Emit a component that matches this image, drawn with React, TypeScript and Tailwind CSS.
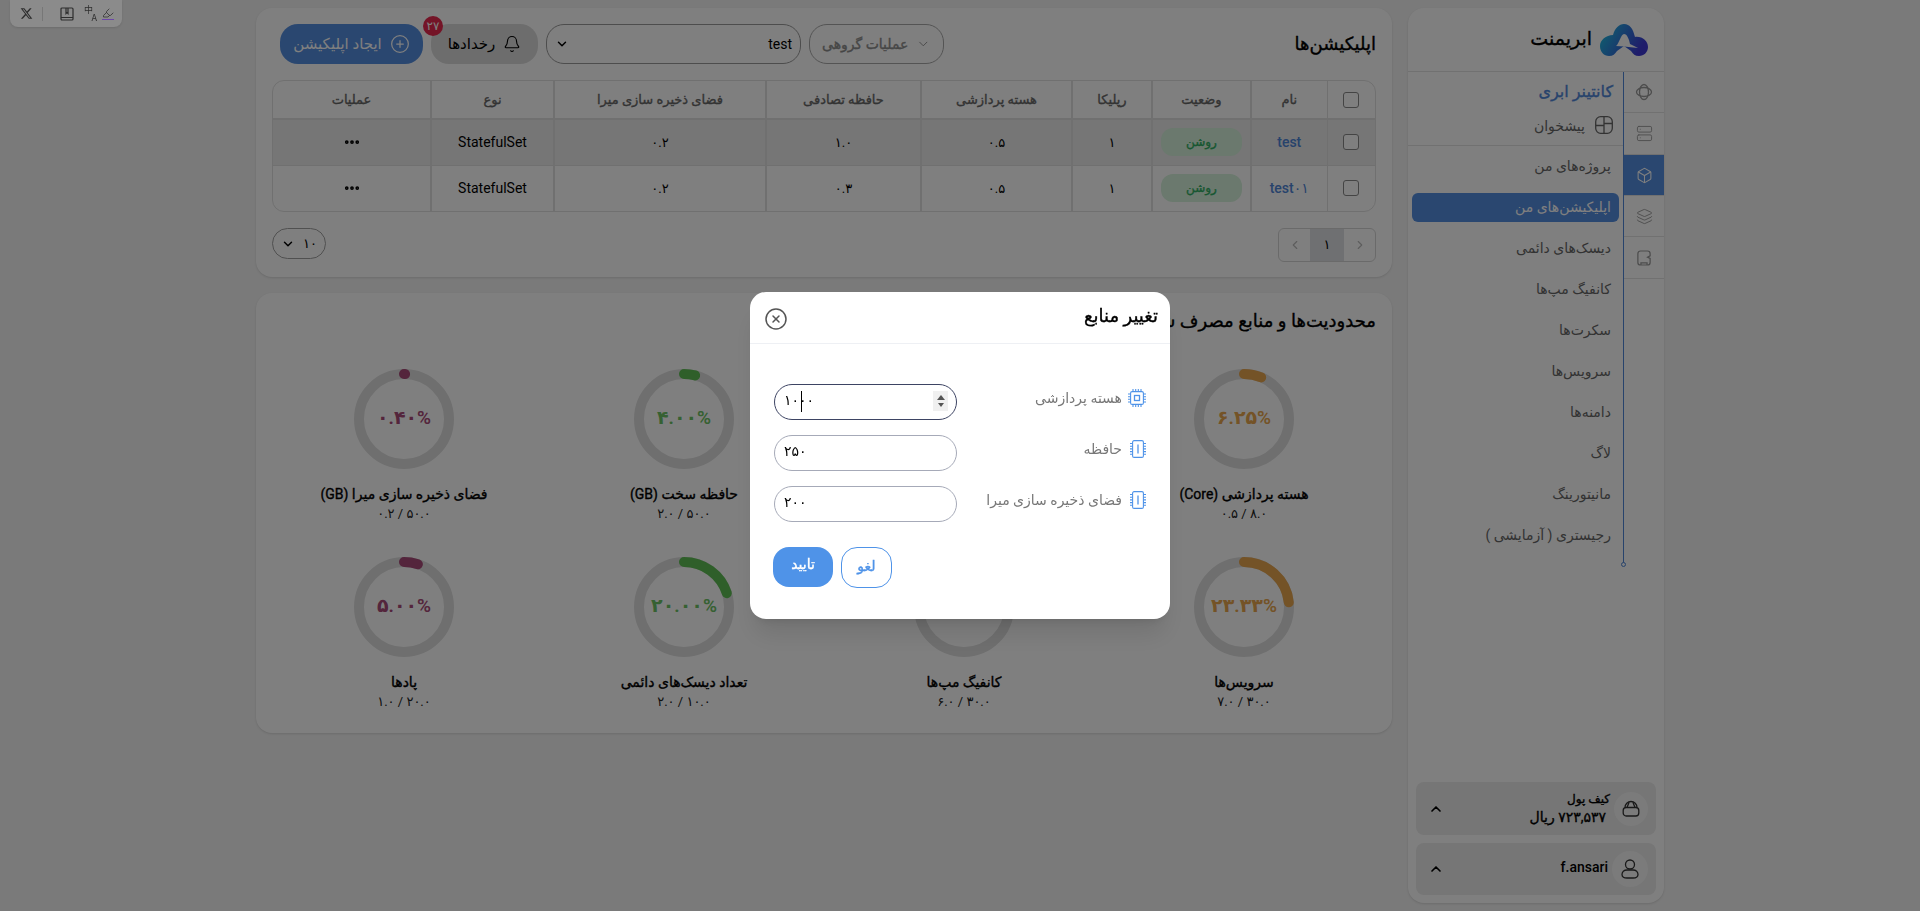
import { Bell, Box, ChevronDown, ChevronLeft, ChevronRight, ChevronUp, CirclePlus, CircleX, Ellipsis, Highlighter, Layers, Server } from "lucide-react";

const menuItems = [
  "پروژه‌های من",
  "اپلیکیشن‌های من",
  "دیسک‌های دائمی",
  "کانفیگ مپ‌ها",
  "سکرت‌ها",
  "سرویس‌ها",
  "دامنه‌ها",
  "لاگ",
  "مانیتورینگ",
  "رجیستری ( آزمایشی )",
];

// DejaVu's bold runs much wider than the reference, so thicken the regular cut instead
const heavy = "font-normal [-webkit-text-stroke:0.35px_currentColor]";

const orange = { stroke: "#e8a64e", text: "text-[#e8a64e]" };
const green = { stroke: "#5fbf55", text: "text-[#6cc264]" };
const purple = { stroke: "#a84a78", text: "text-[#a84a78]" };

const gauges = [
  { title: "هسته پردازشی (Core)", sub: "۰.۵ / ۸.۰", pct: 6.25, label: "۶.۲۵%", tone: orange },
  { title: "حافظه تصادفی (GB)", sub: "۱.۳ / ۱۶.۰", pct: 8.13, label: "۸.۱۳%", tone: orange },
  { title: "حافظه سخت (GB)", sub: "۲.۰ / ۵۰.۰", pct: 4, label: "۴.۰۰%", tone: green },
  { title: "فضای ذخیره سازی میرا (GB)", sub: "۰.۲ / ۵۰.۰", pct: 0.4, label: "۰.۴۰%", tone: purple },
  { title: "سرویس‌ها", sub: "۷.۰ / ۳۰.۰", pct: 23.33, label: "۲۳.۳۳%", tone: orange },
  { title: "کانفیگ مپ‌ها", sub: "۶.۰ / ۳۰.۰", pct: 20, label: "۲۰.۰۰%", tone: green },
  { title: "تعداد دیسک‌های دائمی", sub: "۲.۰ / ۱۰.۰", pct: 20, label: "۲۰.۰۰%", tone: green },
  { title: "پادها", sub: "۱.۰ / ۲۰.۰", pct: 5, label: "۵.۰۰%", tone: purple },
];

const rows = [
  { name: "test", memory: "۱.۰", hover: true },
  { name: "test۰۱", memory: "۰.۳", hover: false },
];

const Logo = () => (
  <svg width="48" height="32" viewBox="0 0 48 32">
    <defs>
      <linearGradient id="logoFill" x1="0" y1="0" x2="1" y2="0.4">
        <stop offset="0" stopColor="#1ccbe0" />
        <stop offset="1" stopColor="#3e38d4" />
      </linearGradient>
    </defs>
    <path
      d="M13 11C15 4 19 0 24 0C30 0 33 5 35 13C42 12 48 17 48 23C48 28 44 32 39 32C35 32 33 30 31 27L24 22L17 27C15 30 13 32 9 32C4 32 0 28 0 22C0 16 6 11 13 11Z"
      fill="url(#logoFill)"
    />
    <path d="M24 10C27 10 29 15 30 20L38 24L24 22.5L16 22C19 20 21 10 24 10Z" fill="#fff" />
  </svg>
);

const OrbitIcon = () => (
  <svg width="18" height="18" viewBox="0 0 18 18" fill="none" stroke="#999" strokeWidth="1.3">
    <ellipse cx="9" cy="9" rx="4.5" ry="7.5" />
    <ellipse cx="9" cy="9" rx="7.5" ry="4.5" />
  </svg>
);

const SimIcon = () => (
  <svg width="14" height="16" viewBox="0 0 16 18" fill="none" stroke="#999" strokeWidth="1.4">
    <path d="M4 1H12A3 3 0 0 1 15 4V6.5L12 8L15 9.5V14A3 3 0 0 1 12 17H4A3 3 0 0 1 1 14V4A3 3 0 0 1 4 1Z" />
    <path d="M4.5 17V14.5H11.5V17" />
  </svg>
);

const DashIcon = () => (
  <svg width="18" height="18" viewBox="0 0 18 18" fill="none" stroke="#666" strokeWidth="1.3">
    <rect x="0.7" y="0.7" width="16.6" height="16.6" rx="5" />
    <path d="M9 0.7V17.3M0.7 9.5H9M9 7.5H17.3" />
  </svg>
);

const WalletIcon = () => (
  <svg width="18" height="18" viewBox="0 0 18 18" fill="none" stroke="#333" strokeWidth="1.3">
    <path d="M3 7.5A6 6 0 0 1 15 7.5" />
    <rect x="1.2" y="7.5" width="15.6" height="8.5" rx="3" />
    <path d="M7 2.5L5 7.5M11 2.5L13 7.5" />
  </svg>
);

const UserIcon = () => (
  <svg width="18" height="20" viewBox="0 0 18 20" fill="none" stroke="#333" strokeWidth="1.3">
    <circle cx="9" cy="5.5" r="4.5" />
    <path d="M6 11H12C15 11 17 13 17 15.5C17 18 15 19 12 19H6C3 19 1 18 1 15.5C1 13 3 11 6 11Z" />
  </svg>
);

const CpuChip = () => (
  <svg width="18" height="18" viewBox="0 0 18 18" fill="none" stroke="#4f93e8" strokeWidth="1.1">
    <rect x="2.6" y="2.6" width="12.8" height="12.8" rx="1.5" />
    <rect x="6.5" y="6.5" width="5" height="5" strokeWidth="1.3" />
    <path d="M5 0V2.6M7.7 0V2.6M10.3 0V2.6M13 0V2.6M5 15.4V18M7.7 15.4V18M10.3 15.4V18M13 15.4V18M0 5H2.6M0 7.7H2.6M0 10.3H2.6M0 13H2.6M15.4 5H18M15.4 7.7H18M15.4 10.3H18M15.4 13H18" />
  </svg>
);

const RamChip = () => (
  <svg width="16" height="18" viewBox="0 0 16 18" fill="none" stroke="#4f93e8" strokeWidth="1.1">
    <rect x="2.6" y="0.6" width="10.8" height="16.8" rx="1.5" />
    <path d="M8 4.5V13.5" strokeWidth="1.3" />
    <path d="M0 3.5H2.6M0 6.2H2.6M0 8.9H2.6M0 11.6H2.6M0 14.3H2.6M13.4 3.5H16M13.4 6.2H16M13.4 8.9H16M13.4 11.6H16M13.4 14.3H16" />
  </svg>
);

const BookIcon = () => (
  <svg className="shrink-0" width="14" height="14" viewBox="0 0 14 14" fill="none" stroke="#2e2e2e" strokeWidth="1.2">
    <rect x="1" y="1" width="12" height="12" rx="1" />
    <path d="M1 10.5H13M6 1V6.5L7 5.5L8 6.5V1" />
  </svg>
);

const XLogo = () => (
  <svg className="shrink-0" width="13" height="13" viewBox="0 0 24 24" fill="#2e2e2e">
    <path d="M18.2 2.3h3.3l-7.2 8.2L22.8 21.8h-6.6l-5.2-6.8-6 6.8H1.7l7.7-8.8L1.2 2.3h6.8l4.7 6.2zm-1.2 17.5h1.8L7 4.2H5z" />
  </svg>
);

const Gauge = ({ item }: { item: (typeof gauges)[number] }) => (
  <div className="flex flex-col items-center">
    <div className="relative h-[100px] w-[100px]">
      <svg width="100" height="100" viewBox="0 0 100 100" className="-rotate-90">
        <circle cx="50" cy="50" r="45" fill="none" stroke="#dfdfdf" strokeWidth="10" />
        <circle
          cx="50"
          cy="50"
          r="45"
          fill="none"
          stroke={item.tone.stroke}
          strokeWidth="10"
          strokeLinecap="round"
          pathLength="100"
          strokeDasharray={`${item.pct} 100`}
        />
      </svg>
      <div className={`absolute inset-0 flex items-center justify-center pb-0.5 text-[19px] font-semibold ${item.tone.text}`}>
        <span dir="ltr">{item.label}</span>
      </div>
    </div>
    <div className={`mt-[15px] text-sm leading-5 text-black ${heavy}`}>{item.title}</div>
    <div dir="ltr" className="text-[13px] leading-5 text-[#222]">
      {item.sub}
    </div>
  </div>
);

const Field = ({
  icon,
  label,
  value,
  focused,
}: {
  icon: React.ReactNode;
  label: string;
  value: string;
  focused?: boolean;
}) => (
  <div className="flex items-start justify-between">
    <div className="mt-1 flex items-center gap-[6px] text-sm leading-5 text-[#777]">
      <span className="flex w-[18px] justify-start">{icon}</span>
      {label}
    </div>
    <div className="relative">
      <input
        dir="ltr"
        readOnly
        value={value}
        className={`h-9 w-[183px] rounded-[18px] bg-white px-[9px] pb-1 text-sm text-black outline-none ${
          focused ? "border-[1.5px] border-[#3d4463]" : "border border-[#a6aab8]"
        }`}
      />
      {focused && (
        <>
          <span className="absolute top-[7px] left-[27px] h-[21px] w-px bg-black" />
          <span className="absolute top-[7px] right-[9px] flex h-5 w-[15px] flex-col items-center justify-center gap-[3px] bg-[#f0f0f0]">
            <span className="h-0 w-0 border-x-[4px] border-b-[5px] border-x-transparent border-b-[#555]" />
            <span className="h-0 w-0 border-x-[3px] border-t-[4px] border-x-transparent border-t-[#555]" />
          </span>
        </>
      )}
    </div>
  </div>
);

export default function App() {
  return (
    <div
      dir="rtl"
      className="flex h-[911px] gap-4 overflow-hidden bg-[#f5f5f5] px-[256px] py-2 [font-family:Roboto,'DejaVu_Sans',sans-serif]"
    >
      <aside className="flex w-[256px] shrink-0 flex-col rounded-2xl bg-white shadow-sm">
        <div className="flex h-16 items-center gap-2 border-b border-[#e3e3e3] px-4">
          <Logo />
          <span className={`text-[19px] text-black ${heavy}`}>ابریمنت</span>
        </div>
        <div className="flex">
          <div className="w-10 shrink-0 text-[#999]">
            <div className="flex h-[41px] items-center justify-center border-b border-[#e3e3e3]">
              <OrbitIcon />
            </div>
            <div className="flex h-[42px] items-center justify-center border-b border-[#e3e3e3]">
              <Server size={17} strokeWidth={1.3} />
            </div>
            <div className="flex h-[41px] items-center justify-center border-b border-[#e3e3e3] bg-[#548ee0] text-white">
              <Box size={17} strokeWidth={1.5} />
            </div>
            <div className="flex h-[41px] items-center justify-center border-b border-[#e3e3e3]">
              <Layers size={17} strokeWidth={1.3} />
            </div>
            <div className="flex h-[42px] items-center justify-center border-b border-[#e3e3e3]">
              <SimIcon />
            </div>
          </div>
          <div className="relative flex-1 border-r border-[#4f86d8]">
            <div className={`flex h-10 items-center pr-[10px] text-base text-[#4f86d8] ${heavy}`}>کانتینر ابری</div>
            <div className="flex h-[34px] items-start gap-[10px] border-b border-[#e3e3e3] pr-[10px] pt-1 text-sm leading-5 text-[#666]">
              <DashIcon />
              پیشخوان
            </div>
            <div className="flex flex-col gap-3 px-1 pt-[6px] pb-[15px]">
              {menuItems.map((item, i) => (
                <div
                  key={item}
                  className={`flex h-[29px] items-center rounded-md pr-2 pb-0.5 text-sm ${
                    i === 1 ? "bg-[#548ee0] text-white" : "text-[#666]"
                  }`}
                >
                  {item}
                </div>
              ))}
            </div>
            <span className="absolute -bottom-0.5 -right-[3px] h-[5px] w-[5px] rounded-full border border-[#4f86d8] bg-white" />
          </div>
        </div>
        <div className="mt-auto flex flex-col gap-2 p-2">
          <div className="flex h-[53px] items-center rounded-lg bg-[#ececec] pr-2 pl-3">
            <span className="flex h-[34px] w-[34px] items-center justify-center rounded-full bg-[#f7f7f7]">
              <WalletIcon />
            </span>
            <div className="mr-1 flex-1 text-black">
              <div className={`text-xs leading-4 ${heavy}`}>کیف پول</div>
              <div className={`pr-1 text-sm leading-5 ${heavy}`}>۷۲۳,۵۳۷ ریال</div>
            </div>
            <ChevronUp size={16} strokeWidth={2.5} />
          </div>
          <div className="flex h-[52px] items-center rounded-lg bg-[#ececec] pr-2 pl-3">
            <span className="flex h-9 w-9 items-center justify-center rounded-full bg-[#f7f7f7]">
              <UserIcon />
            </span>
            <div className="mr-1 flex-1 pb-1 text-sm font-medium text-black">f.ansari</div>
            <ChevronUp size={16} strokeWidth={2.5} />
          </div>
        </div>
      </aside>

      <main className="flex h-[725px] w-[1136px] shrink-0 flex-col gap-4">
        <section className="h-[269px] shrink-0 rounded-2xl bg-white px-4 pt-4 shadow-sm">
          <div className="flex h-10 items-center justify-between">
            <h1 className={`text-lg text-black ${heavy}`}>اپلیکیشن‌ها</h1>
            <div className="flex items-center gap-2 pl-2">
              <div className={`flex h-10 w-[135px] items-center gap-2 rounded-[18px] border border-[#a8a8a8] px-3 text-sm whitespace-nowrap text-[#8d8d8d] ${heavy}`}>
                <ChevronDown size={16} strokeWidth={1.5} />
                عملیات گروهی
              </div>
              <div className="flex h-10 w-[255px] items-center justify-between rounded-[18px] border border-[#9a9a9a] px-2 text-sm text-black">
                test
                <ChevronDown size={14} strokeWidth={2.5} />
              </div>
              <div className="relative flex h-10 w-[107px] items-center justify-center gap-2 rounded-[18px] bg-[#dadada] text-[15px] text-black">
                <Bell size={18} strokeWidth={1.5} />
                رخدادها
                <span className="absolute -top-2 -left-[8px] flex h-5 w-5 items-center justify-center rounded-full bg-[#e8284e] text-xs text-white">
                  ۲۷
                </span>
              </div>
              <div className="flex h-10 w-[143px] items-center justify-center gap-2 rounded-[18px] bg-[#548ee0] text-[15px] text-white">
                <CirclePlus size={20} strokeWidth={1.5} />
                ایجاد اپلیکیشن
              </div>
            </div>
          </div>

          <div className="mt-4 overflow-hidden rounded-xl border border-[#e0e0e0]">
            <table className="w-full table-fixed border-collapse text-center text-[13px] text-black">
              <thead>
                <tr className="h-[38px] border-b-2 border-[#e0e0e0] text-[#666]">
                  <th className="w-[48px] border-l border-[#e0e0e0]">
                    <input type="checkbox" readOnly className="mx-auto block h-4 w-4 appearance-none rounded-[3px] border border-[#888] bg-white" />
                  </th>
                  <th className={`w-[76px] border-l-2 border-[#e0e0e0] ${heavy}`}>نام</th>
                  <th className={`w-[99px] border-l-2 border-[#e0e0e0] ${heavy}`}>وضعیت</th>
                  <th className={`w-[80px] border-l-2 border-[#e0e0e0] ${heavy}`}>رپلیکا</th>
                  <th className={`w-[151px] border-l-2 border-[#e0e0e0] ${heavy}`}>هسته پردازشی</th>
                  <th className={`w-[155px] border-l-2 border-[#e0e0e0] ${heavy}`}>حافظه تصادفی</th>
                  <th className={`w-[212px] border-l-2 border-[#e0e0e0] ${heavy}`}>فضای ذخیره سازی میرا</th>
                  <th className={`w-[123px] border-l-2 border-[#e0e0e0] ${heavy}`}>نوع</th>
                  <th className={heavy}>عملیات</th>
                </tr>
              </thead>
              <tbody>
                {rows.map((row) => (
                  <tr key={row.name} className={`h-[46px] border-b border-[#e0e0e0] last:border-b-0 ${row.hover ? "bg-[#ececec]" : ""}`}>
                    <td className="border-l border-[#e0e0e0]">
                      <input type="checkbox" readOnly className="mx-auto block h-4 w-4 appearance-none rounded-[3px] border border-[#888] bg-white" />
                    </td>
                    <td className="border-l-2 border-[#e0e0e0] text-sm font-medium text-[#4f86d8]">{row.name}</td>
                    <td className="border-l-2 border-[#e0e0e0]">
                      <span className={`mx-auto flex h-7 w-[81px] items-center justify-center rounded-xl bg-[#d6f2dc] text-xs text-[#2fae62] ${heavy}`}>
                        روشن
                      </span>
                    </td>
                    <td className="border-l-2 border-[#e0e0e0]">۱</td>
                    <td className="border-l-2 border-[#e0e0e0]">۰.۵</td>
                    <td className="border-l-2 border-[#e0e0e0]">{row.memory}</td>
                    <td className="border-l-2 border-[#e0e0e0]">۰.۲</td>
                    <td className="border-l-2 border-[#e0e0e0] text-sm">StatefulSet</td>
                    <td>
                      <Ellipsis size={18} strokeWidth={3} className="mx-auto" />
                    </td>
                  </tr>
                ))}
              </tbody>
            </table>
          </div>

          <div className="mt-4 flex items-start justify-between">
            <div className="flex h-[34px] w-[98px] overflow-hidden rounded-md border border-[#d5d5d5] text-[#bbb]">
              <span className="flex flex-1 items-center justify-center">
                <ChevronRight size={14} />
              </span>
              <span className="flex w-[34px] items-center justify-center bg-[#dfe1e5] text-[13px] text-black">۱</span>
              <span className="flex flex-1 items-center justify-center">
                <ChevronLeft size={14} />
              </span>
            </div>
            <div className="flex h-[31px] w-[54px] items-center justify-center gap-2 rounded-[16px] border border-[#a0a0a0] text-[13px] text-black">
              ۱۰
              <ChevronDown size={14} strokeWidth={2.5} />
            </div>
          </div>
        </section>

        <section className="h-[440px] shrink-0 rounded-2xl bg-white pt-[14px] shadow-sm">
          <h2 className={`px-4 text-lg leading-7 text-black ${heavy}`}>محدودیت‌ها و منابع مصرف شده</h2>
          <div className="mt-[34px] grid grid-cols-4 gap-y-[33px] px-2">
            {gauges.map((item) => (
              <Gauge key={item.title} item={item} />
            ))}
          </div>
        </section>
      </main>

      <div className="fixed inset-0 flex items-center justify-center bg-black/50">
        <div className="h-[327px] w-[420px] rounded-2xl bg-white shadow-xl">
          <div className="flex h-[52px] items-center justify-between border-b border-[#eef0f4] pr-3 pl-[14px]">
            <span className={`pb-1 text-lg text-black ${heavy}`}>تغییر منابع</span>
            <CircleX size={24} strokeWidth={1.5} className="mt-0.5 text-[#555]" />
          </div>
          <div className="flex flex-col gap-[15px] px-6 pt-10">
            <Field icon={<CpuChip />} label="هسته پردازشی" value="۱۰۰۰" focused />
            <Field icon={<RamChip />} label="حافظه" value="۲۵۰" />
            <Field icon={<RamChip />} label="فضای ذخیره سازی میرا" value="۲۰۰" />
          </div>
          <div className="mt-[25px] -ml-px flex items-start justify-end gap-2 pl-6">
            <button className={`h-[41px] w-[51px] rounded-2xl border border-[#4f93e8] pb-1 text-sm text-[#4f93e8] ${heavy}`}>لغو</button>
            <button className={`h-10 w-[60px] rounded-2xl bg-[#4f93e8] pb-1.5 text-sm text-white ${heavy}`}>تایید</button>
          </div>
        </div>
      </div>

      <div dir="ltr" className="fixed top-0 left-[10px] flex h-[27px] w-[112px] items-center rounded-b-lg bg-[#8b8b8b] pl-[10px] shadow-sm">
        <XLogo />
        <span className="mr-[17px] ml-[9px] h-[14px] w-px shrink-0 bg-[#777]" />
        <BookIcon />
        <span className="mr-[3px] ml-[10px] grid h-4 w-[15px] shrink-0 grid-cols-2 grid-rows-2 text-[9px] leading-[8px] text-[#2e2e2e] [font-family:'Noto_Sans_CJK_SC',sans-serif]">
          <span>中</span>
          <span />
          <span />
          <span>A</span>
        </span>
        <span className="flex shrink-0 flex-col items-center">
          <Highlighter size={12} strokeWidth={1.5} className="text-[#2e2e2e]" />
          <span className="h-px w-3 bg-[#6b46a8]" />
        </span>
      </div>
    </div>
  );
}
